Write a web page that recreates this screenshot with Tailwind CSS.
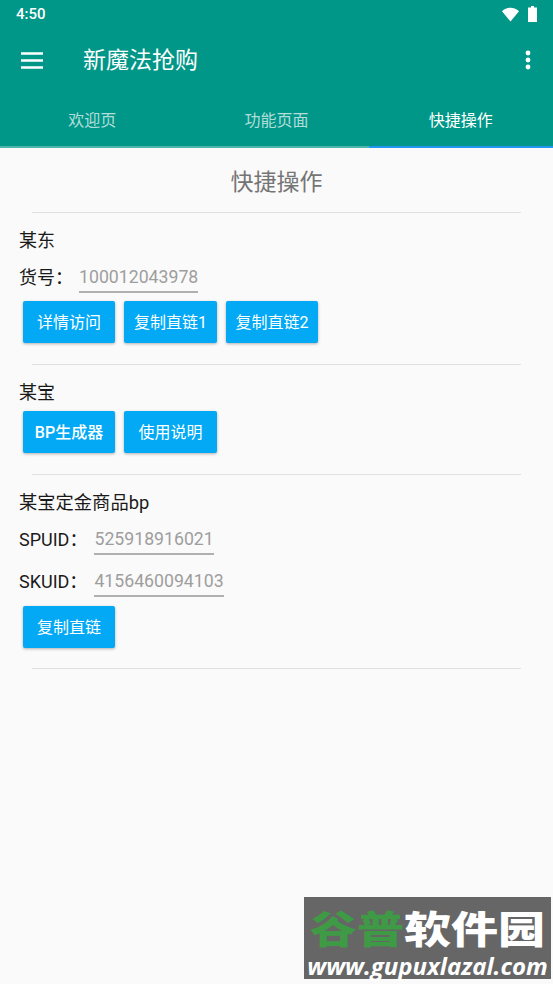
<!DOCTYPE html>
<html>
<head>
<meta charset="utf-8">
<script src="https://cdn.jsdelivr.net/npm/@tailwindcss/browser@4"></script>
</head>
<body class="bg-[#fafafa] font-['Roboto','Noto_Sans_CJK_SC',sans-serif]">
<div class="relative w-[553px] h-[984px] overflow-hidden bg-[#fafafa]">
    <!-- Status bar + toolbar + tabs -->
    <div class="bg-[#009688] h-[148px] flex flex-col text-white">
        <div class="h-[28px] flex items-center justify-between pl-[16px] pr-[16px]">
            <span class="text-[15px] font-medium leading-none">4:50</span>
            <div class="flex items-center gap-[9px]">
                <svg width="17" height="15" viewBox="0 0 17 15"><path d="M0 4.2C2.2 2 5.2.8 8.5.8S14.800 2 17 4.200L8.500 14.500z" fill="#fff"/></svg>
                <svg width="9" height="16" viewBox="0 0 9 16"><path d="M3 0h3v1.500h3V16H0V1.500h3z" fill="#fff"/></svg>
            </div>
        </div>
        <div class="h-[64px] flex items-center pl-[21px] pr-[22px]">
            <svg width="22" height="17" viewBox="0 0 22 17" class="shrink-0"><path d="M0 1.500h22M0 8.500h22M0 15.500h22" stroke="#fff" stroke-width="2.500"/></svg>
            <span class="ml-[40px] text-[23px] leading-none flex-1">新魔法抢购</span>
            <svg width="6" height="20" viewBox="0 0 6 20"><circle cx="3" cy="3" r="2.400" fill="#fff"/><circle cx="3" cy="10" r="2.400" fill="#fff"/><circle cx="3" cy="17" r="2.400" fill="#fff"/></svg>
        </div>
        <div class="flex-1 grid grid-cols-3 text-[16px]">
            <div class="flex items-center justify-center border-b-2 border-[#4db6ac] text-white/70 pt-[3px]">欢迎页</div>
            <div class="flex items-center justify-center border-b-2 border-[#4db6ac] text-white/70 pt-[3px]">功能页面</div>
            <div class="flex items-center justify-center border-b-2 border-[#2196f3] pt-[3px]">快捷操作</div>
        </div>
    </div>

    <!-- Content -->
    <div class="flex flex-col text-[18px] text-[#1a1a1a]">
        <h2 class="h-[65px] flex items-center justify-center text-[23px] text-[#757575] border-b-[1.500px] border-[#e0e0e0] mx-[32px] pt-[6px]">快捷操作</h2>

        <div class="pl-[19px] pt-[15px]">
            <div class="h-[26px] leading-[26px]">某东</div>
            <div class="flex items-center h-[38px] mt-[4px]">
                <span>货号：</span>
                <span class="ml-[6px] text-[17.700px] text-[#9e9e9e] border-b-2 border-[#b0b0b0] leading-[28px] mt-[2px]">100012043978</span>
            </div>
            <div class="flex gap-[9px] ml-[4px] mt-[5px]">
                <button class="w-[92px] h-[42px] pt-[2px] bg-[#03a9f4] text-white text-[16px] rounded-[2px] shadow-[0_1px_3px_rgba(0,0,0,0.3)]">详情访问</button>
                <button class="w-[93px] h-[42px] pt-[2px] bg-[#03a9f4] text-white text-[16px] rounded-[2px] shadow-[0_1px_3px_rgba(0,0,0,0.3)]">复制直链1</button>
                <button class="w-[92px] h-[42px] pt-[2px] bg-[#03a9f4] text-white text-[16px] rounded-[2px] shadow-[0_1px_3px_rgba(0,0,0,0.3)]">复制直链2</button>
            </div>
        </div>
        <div class="mx-[32px] mt-[21px] border-b-[1.500px] border-[#e0e0e0]"></div>

        <div class="pl-[19px] pt-[15px]">
            <div class="h-[26px] leading-[26px]">某宝</div>
            <div class="flex gap-[9px] ml-[4px] mt-[5px]">
                <button class="w-[92px] h-[42px] pt-[2px] bg-[#03a9f4] text-white text-[16px] font-medium rounded-[2px] shadow-[0_1px_3px_rgba(0,0,0,0.3)]">BP生成器</button>
                <button class="w-[93px] h-[42px] pt-[2px] bg-[#03a9f4] text-white text-[16px] rounded-[2px] shadow-[0_1px_3px_rgba(0,0,0,0.3)]">使用说明</button>
            </div>
        </div>
        <div class="mx-[32px] mt-[21px] border-b-[1.500px] border-[#e0e0e0]"></div>

        <div class="pl-[19px] pt-[15px]">
            <div class="h-[26px] leading-[26px] text-[18.300px]">某宝定金商品bp</div>
            <div class="flex items-center h-[38px] mt-[4px]">
                <span>SPUID：</span>
                <span class="ml-[7px] text-[17.700px] text-[#9e9e9e] border-b-2 border-[#b0b0b0] leading-[28px] mt-[2px]">525918916021</span>
            </div>
            <div class="flex items-center h-[38px] mt-[4px]">
                <span>SKUID：</span>
                <span class="ml-[7px] text-[17.700px] text-[#9e9e9e] border-b-2 border-[#b0b0b0] leading-[28px] mt-[2px]">4156460094103</span>
            </div>
            <button class="block w-[92px] h-[42px] pt-[2px] bg-[#03a9f4] text-white text-[16px] rounded-[2px] shadow-[0_1px_3px_rgba(0,0,0,0.3)] ml-[4px] mt-[6px]">复制直链</button>
        </div>
        <div class="mx-[32px] mt-[20px] border-b-[1.500px] border-[#e0e0e0]"></div>
    </div>

    <!-- Watermark -->
    <div class="absolute left-[304px] top-[897px] w-[247px] h-[82px] bg-[#666666] flex flex-col items-center">
        <div class="text-[47px] leading-[44px] font-black whitespace-nowrap mt-[11px] scale-y-[0.8]"><span class="text-[#3f9a45]">谷普</span><span class="text-white">软件园</span></div>
        <div class="text-[24px] leading-[20px] font-bold italic text-white whitespace-nowrap mt-[4px] font-['Open_Sans',sans-serif]">www.gupuxlazal.com</div>
    </div>
</div>
</body>
</html>
